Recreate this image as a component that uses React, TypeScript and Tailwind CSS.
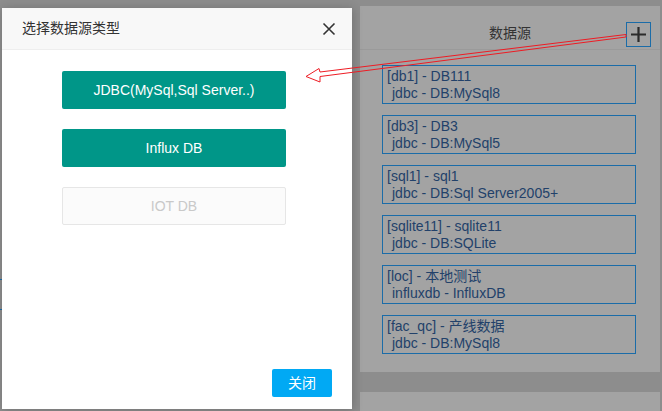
import React from 'react';

const sources = [
  { code: 'db1', name: 'DB111', type: 'jdbc - DB:MySql8' },
  { code: 'db3', name: 'DB3', type: 'jdbc - DB:MySql5' },
  { code: 'sql1', name: 'sql1', type: 'jdbc - DB:Sql Server2005+' },
  { code: 'sqlite11', name: 'sqlite11', type: 'jdbc - DB:SQLite' },
  { code: 'loc', name: '本地测试', type: 'influxdb - InfluxDB' },
  { code: 'fac_qc', name: '产线数据', type: 'jdbc - DB:MySql8' },
];

const font = "font-['Liberation_Sans','Noto_Sans_CJK_SC',sans-serif]";

export default function App() {
  return (
    <div className={`relative w-[662px] h-[411px] overflow-hidden bg-[#8d8d8d] ${font}`}>
      {/* page behind the overlay */}
      <div className="flex h-full">
        <div className="w-[360px] shrink-0 flex flex-col pt-[279px]">
          <div className="w-[3px] h-[31px] border-y border-[#1b6ca8]" />
        </div>
        <div className="w-[300px] flex flex-col gap-[20px] pt-[6px]">
          <div className="h-[376px] bg-[#a3a3a3] flex flex-col">
            <div className="h-[44px] flex items-start relative border-b border-[#9a9a9a]">
              <span className="w-full text-center text-[14px] leading-[20px] pt-[17px] text-[#333]">数据源</span>
              <div className="absolute right-[9px] top-[16px] w-[25px] h-[25px] border border-[#1b6ca8] flex items-center justify-center">
                <svg width="17" height="17" viewBox="0 0 17 17">
                  <path d="M8.5 1v15M1 8.5h15" stroke="#2b2b2b" strokeWidth="2.2" />
                </svg>
              </div>
            </div>
            <div className="flex flex-col gap-[11px] pl-[22px] pt-[15px]">
              {sources.map((s) => (
                <div key={s.code} className="w-[254px] h-[39px] border border-[#1b6ca8] px-[4px] pt-[2px] text-[14px] leading-[17px] text-[#22416a]">
                  <div>[{s.code}] - {s.name}</div>
                  <div className="pl-[5px]">{s.type}</div>
                </div>
              ))}
            </div>
          </div>
          <div className="h-[20px] bg-[#a3a3a3]" />
        </div>
      </div>

      {/* modal */}
      <div className="absolute left-[2px] top-[8px] w-[350px] h-[401px] bg-white flex flex-col shadow-[1px_1px_10px_rgba(0,0,0,0.2)]">
        <div className="h-[42px] shrink-0 bg-[#f8f8f8] border-b border-[#eee] flex items-center justify-between pl-[20px] pr-[16px]">
          <span className="text-[14px] text-[#333]">选择数据源类型</span>
          <svg width="14" height="14" viewBox="0 0 14 14">
            <path d="M1.5 1.5l11 11M12.5 1.5l-11 11" stroke="#333" strokeWidth="1.6" />
          </svg>
        </div>
        <div className="flex-1 flex flex-col gap-[20px] pl-[60px] pt-[21px]">
          <button className="w-[224px] h-[38px] rounded-[2px] bg-[#009688] text-white text-[14px]">JDBC(MySql,Sql Server..)</button>
          <button className="w-[224px] h-[38px] rounded-[2px] bg-[#009688] text-white text-[14px]">Influx DB</button>
          <button className="w-[224px] h-[38px] rounded-[2px] bg-[#fbfbfb] border border-[#e6e6e6] text-[#c9c9c9] text-[14px]">IOT DB</button>
        </div>
        <div className="flex justify-end pr-[20px] pb-[12px]">
          <button className="w-[60px] h-[28px] rounded-[2px] bg-[#01a9f4] text-white text-[14px]">关闭</button>
        </div>
      </div>

      {/* annotation arrow */}
      <svg className="absolute left-0 top-0" width="662" height="411" viewBox="0 0 662 411">
        <polygon
          points="626,34.5 320,72 319,68.5 306,76.5 320,82 320,76.5 626,37"
          fill="none"
          stroke="#ee1c24"
          strokeWidth="1"
        />
      </svg>
    </div>
  );
}
